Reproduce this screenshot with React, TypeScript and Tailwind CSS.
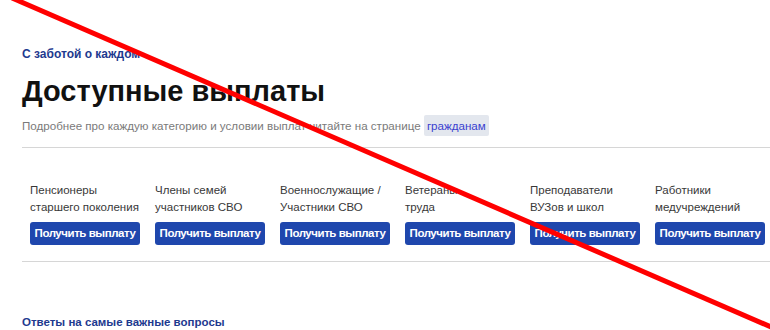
const categories = [
  ["Пенсионеры", "старшего поколения"],
  ["Члены семей", "участников СВО"],
  ["Военнослужащие /", "Участники СВО"],
  ["Ветераны", "труда"],
  ["Преподаватели", "ВУЗов и школ"],
  ["Работники", "медучреждений"],
];

export default function App() {
  return (
    <div className="relative w-[770px] h-[330px] overflow-hidden bg-white font-['Liberation_Sans',Arial,sans-serif]">
      <div className="pl-[22px] pt-[48px]">
        <p className="text-[12px] leading-[13px] font-bold text-[#1e3a8f]">С заботой о каждом</p>
        <h1 className="mt-[13px] text-[29px] leading-[34px] font-bold text-[#111]">Доступные выплаты</h1>
        <p className="mt-[8px] text-[11.6px] leading-[20px] text-[#7a7a7a]">
          Подробнее про каждую категорию и условии выплат читайте на странице{" "}
          <a className="rounded-[2px] bg-[#e3e7ee] px-[3px] py-[4px] text-[#3a3fd0]">гражданам</a>
        </p>

        <div className="mt-[11px] border-t border-[#d6d6d6] pl-[8px] pt-[34px] pb-[16px]">
          <div className="flex">
            {categories.map(([a, b]) => (
              <div key={a} className="w-[125px] shrink-0">
                <p className="text-[11.5px] leading-[17px] text-[#383838]">
                  {a}
                  <br />
                  {b}
                </p>
                <button className="mt-[6px] flex h-[23px] w-[110px] items-center justify-center whitespace-nowrap rounded-[3px] bg-[#1f47ad] text-[11.5px] font-bold tracking-[-0.45px] text-white">
                  Получить выплату
                </button>
              </div>
            ))}
          </div>
        </div>

        <div className="border-t border-[#d6d6d6]" />
        <p className="mt-[54px] text-[11.5px] leading-[13px] font-bold text-[#1e3a8f]">Ответы на самые важные вопросы</p>
      </div>

      <svg className="pointer-events-none absolute inset-0" width="770" height="330" viewBox="0 0 770 330">
        <line x1="12" y1="-2" x2="778" y2="330" stroke="#ff0000" strokeWidth="5" />
      </svg>
    </div>
  );
}
